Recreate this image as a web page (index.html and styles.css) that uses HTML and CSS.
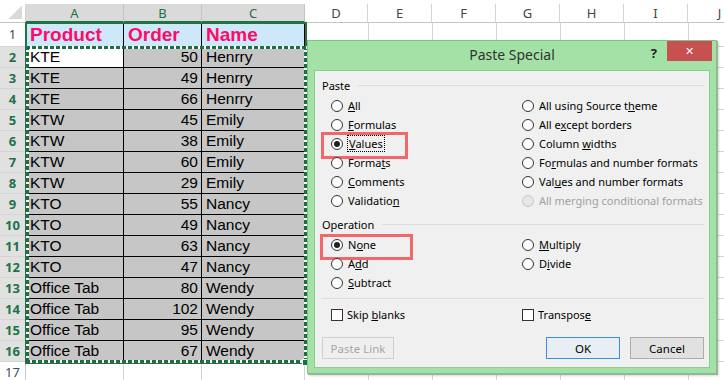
FILE: index.html
```html
<!DOCTYPE html>
<html lang="en">
<head>
  <meta charset="UTF-8" />
  <title>Paste Special</title>
  <link rel="stylesheet" href="styles.css">
</head>
<body>
  <div class="sheet">
    <div class="row head-row">
      <div class="corner"></div>
      <div class="col-head sel">A</div>
      <div class="col-head sel">B</div>
      <div class="col-head sel">C</div>
      <div class="more-heads">
        <div class="col-head">D</div>
        <div class="col-head">E</div>
        <div class="col-head">F</div>
        <div class="col-head">G</div>
        <div class="col-head">H</div>
        <div class="col-head">I</div>
        <div class="col-head">J</div>
      </div>
    </div>
    <div class="row first">
      <div class="rh">1</div>
      <div class="c hd">Product</div>
      <div class="c hd">Order</div>
      <div class="c hd">Name</div>
      <div class="rest"></div>
    </div>
    <div class="row">
      <div class="rh sel">2</div>
      <div class="c active">KTE</div>
      <div class="c num">50</div>
      <div class="c">Henrry</div>
      <div class="rest"></div>
    </div>
    <div class="row">
      <div class="rh sel">3</div>
      <div class="c">KTE</div>
      <div class="c num">49</div>
      <div class="c">Henrry</div>
      <div class="rest"></div>
    </div>
    <div class="row">
      <div class="rh sel">4</div>
      <div class="c">KTE</div>
      <div class="c num">66</div>
      <div class="c">Henrry</div>
      <div class="rest"></div>
    </div>
    <div class="row">
      <div class="rh sel">5</div>
      <div class="c">KTW</div>
      <div class="c num">45</div>
      <div class="c">Emily</div>
      <div class="rest"></div>
    </div>
    <div class="row">
      <div class="rh sel">6</div>
      <div class="c">KTW</div>
      <div class="c num">38</div>
      <div class="c">Emily</div>
      <div class="rest"></div>
    </div>
    <div class="row">
      <div class="rh sel">7</div>
      <div class="c">KTW</div>
      <div class="c num">60</div>
      <div class="c">Emily</div>
      <div class="rest"></div>
    </div>
    <div class="row">
      <div class="rh sel">8</div>
      <div class="c">KTW</div>
      <div class="c num">29</div>
      <div class="c">Emily</div>
      <div class="rest"></div>
    </div>
    <div class="row">
      <div class="rh sel">9</div>
      <div class="c">KTO</div>
      <div class="c num">55</div>
      <div class="c">Nancy</div>
      <div class="rest"></div>
    </div>
    <div class="row">
      <div class="rh sel">10</div>
      <div class="c">KTO</div>
      <div class="c num">49</div>
      <div class="c">Nancy</div>
      <div class="rest"></div>
    </div>
    <div class="row">
      <div class="rh sel">11</div>
      <div class="c">KTO</div>
      <div class="c num">63</div>
      <div class="c">Nancy</div>
      <div class="rest"></div>
    </div>
    <div class="row">
      <div class="rh sel">12</div>
      <div class="c">KTO</div>
      <div class="c num">47</div>
      <div class="c">Nancy</div>
      <div class="rest"></div>
    </div>
    <div class="row">
      <div class="rh sel">13</div>
      <div class="c">Office Tab</div>
      <div class="c num">80</div>
      <div class="c">Wendy</div>
      <div class="rest"></div>
    </div>
    <div class="row">
      <div class="rh sel">14</div>
      <div class="c">Office Tab</div>
      <div class="c num">102</div>
      <div class="c">Wendy</div>
      <div class="rest"></div>
    </div>
    <div class="row">
      <div class="rh sel">15</div>
      <div class="c">Office Tab</div>
      <div class="c num">95</div>
      <div class="c">Wendy</div>
      <div class="rest"></div>
    </div>
    <div class="row">
      <div class="rh sel">16</div>
      <div class="c">Office Tab</div>
      <div class="c num">67</div>
      <div class="c">Wendy</div>
      <div class="rest"></div>
    </div>
    <div class="row">
      <div class="rh">17</div>
      <div class="c empty"></div>
      <div class="c empty"></div>
      <div class="c empty"></div>
      <div class="rest"></div>
    </div>
  </div>

  <div class="selection"></div>
  <div class="ants"></div>
  <div class="fill-handle"></div>

  <div class="dialog">
    <div class="titlebar">
      <span class="title">Paste Special</span>
      <span class="help">?</span>
      <span class="close">&#x2715;</span>
    </div>
    <div class="panel">
      <div class="group-title"><span>Paste</span><i></i></div>
      <div class="options">
        <label class="opt"><span class="radio"></span><span><u>A</u>ll</span></label>
        <label class="opt"><span class="radio"></span><span>All using Source t<u>h</u>eme</span></label>
        <label class="opt"><span class="radio"></span><span><u>F</u>ormulas</span></label>
        <label class="opt"><span class="radio"></span><span>All e<u>x</u>cept borders</span></label>
        <label class="opt marked"><span class="radio checked"></span><span class="focus"><u>V</u>alues</span></label>
        <label class="opt"><span class="radio"></span><span>Column <u>w</u>idths</span></label>
        <label class="opt"><span class="radio"></span><span>Forma<u>t</u>s</span></label>
        <label class="opt"><span class="radio"></span><span>Fo<u>r</u>mulas and number formats</span></label>
        <label class="opt"><span class="radio"></span><span><u>C</u>omments</span></label>
        <label class="opt"><span class="radio"></span><span>Val<u>u</u>es and number formats</span></label>
        <label class="opt"><span class="radio"></span><span>Validatio<u>n</u></span></label>
        <label class="opt disabled"><span class="radio"></span><span>All merging conditional formats</span></label>
      </div>

      <div class="group-title op"><span>Operation</span><i></i></div>
      <div class="options">
        <label class="opt marked wide"><span class="radio checked"></span><span>N<u>o</u>ne</span></label>
        <label class="opt"><span class="radio"></span><span><u>M</u>ultiply</span></label>
        <label class="opt"><span class="radio"></span><span>A<u>d</u>d</span></label>
        <label class="opt"><span class="radio"></span><span>D<u>i</u>vide</span></label>
        <label class="opt"><span class="radio"></span><span><u>S</u>ubtract</span></label>
      </div>

      <div class="separator"></div>

      <div class="options checks">
        <label class="opt"><span class="box"></span><span>Skip <u>b</u>lanks</span></label>
        <label class="opt"><span class="box"></span><span>Transpos<u>e</u></span></label>
      </div>

      <div class="buttons">
        <button class="btn" disabled>Paste Link</button>
        <div class="right">
          <button class="btn default">OK</button>
          <button class="btn">Cancel</button>
        </div>
      </div>
    </div>
  </div>
</body>
</html>
```

FILE: styles.css
```css
* {
  box-sizing: border-box;
}
body {
  margin: 0;
  width: 724px;
  height: 380px;
  overflow: hidden;
  position: relative;
  background-color: #fff;
  font-family: "Liberation Sans", Arial, sans-serif;
}

/* sheet */
.sheet {
  padding-top: 4px;
}
.row {
  display: grid;
  grid-template-columns: 26px 98px 78px 103px 1fr;
  grid-template-rows: 100%;
  height: 21px;
}
.row.first {
  height: 24px;
}
.row.head-row {
  height: 19px;
}
.corner {
  border-right: 1px solid #d4d4d4;
  border-bottom: 1px solid #c6c6c6;
  background: linear-gradient(to top left, #d9d9d9 50%, transparent 50%) no-repeat right 3px bottom 3px / 13px 13px;
}
.col-head {
  text-align: center;
  font-family: "Noto Sans", sans-serif;
  font-size: 13px;
  line-height: 18px;
  color: #444;
  border-right: 1px solid #d4d4d4;
  border-bottom: 1px solid #c6c6c6;
}
.col-head.sel {
  background-color: #dadada;
  color: #217346;
  border-right-color: #c4c4c4;
  border-bottom: 2px solid #217346;
}
.more-heads {
  display: flex;
}
.more-heads .col-head {
  width: 64px;
  flex: none;
}
.more-heads .col-head:first-child {
  width: 63px;
}
.rh {
  text-align: center;
  font-family: "Noto Sans", sans-serif;
  font-size: 13px;
  line-height: 20px;
  color: #3b4a5a;
  border-right: 1px solid #c6c6c6;
  border-bottom: 1px solid #d4d4d4;
}
.row.first .rh {
  line-height: 23px;
}
.rh.sel {
  background-color: #e1e1e1;
  color: #217346;
  font-weight: bold;
}
.c {
  background-color: #c6c6c6;
  border-right: 1px solid #000;
  border-bottom: 1px solid #000;
  font-size: 15.5px;
  line-height: 20px;
  padding: 0 3px 0 4px;
  white-space: nowrap;
  overflow: hidden;
  color: #000;
}
.c.num {
  text-align: right;
}
.c.active {
  background-color: #fff;
}
.c.hd {
  background-color: #cde8f9;
  color: #ff0a6c;
  font-weight: bold;
  font-size: 19px;
  line-height: 23px;
}
.c.empty {
  background-color: #fff;
  border-color: #d4d4d4;
}
.rest {
  border-bottom: 1px solid #d4d4d4;
  background: repeating-linear-gradient(90deg, transparent 0 63px, #d4d4d4 63px 64px);
}

/* selection and copy marquee */
.selection {
  position: absolute;
  left: 25px;
  top: 22px;
  width: 282px;
  height: 342px;
  border: 2px solid #217346;
}
.ants {
  position: absolute;
  left: 26px;
  top: 46px;
  width: 281px;
  height: 317px;
  background:
    repeating-linear-gradient(90deg, #1f6e43 0 4px, #fff 4px 6px) left top / 100% 3px no-repeat,
    repeating-linear-gradient(90deg, #1f6e43 0 4px, #fff 4px 6px) left bottom / 100% 3px no-repeat,
    repeating-linear-gradient(180deg, #1f6e43 0 4px, #fff 4px 6px) left top / 3px 100% no-repeat,
    repeating-linear-gradient(180deg, #1f6e43 0 4px, #fff 4px 6px) right top / 3px 100% no-repeat;
}
.fill-handle {
  position: absolute;
  left: 302px;
  top: 359px;
  width: 7px;
  height: 7px;
  background-color: #1f6e43;
  border: 1px solid #fff;
}

/* dialog */
.dialog {
  position: absolute;
  left: 307px;
  top: 40px;
  width: 410px;
  height: 334px;
  background-color: #a4e1a7;
  border: 1px solid #7cc684;
  box-shadow: 1px 1px 0 #a9a9a9, 2px 2px 2px rgba(0, 0, 0, 0.15);
  font-family: "Noto Sans", sans-serif;
  font-size: 11px;
  color: #000;
  display: flex;
  flex-direction: column;
}
.titlebar {
  height: 29px;
  position: relative;
  display: flex;
  justify-content: center;
  align-items: center;
}
.title {
  font-size: 14px;
  color: #333;
  padding-bottom: 2px;
}
.help {
  position: absolute;
  right: 59px;
  top: 3px;
  font-weight: bold;
  font-size: 13px;
  color: #222;
}
.close {
  position: absolute;
  right: 4px;
  top: 0;
  width: 45px;
  height: 20px;
  background-color: #c75050;
  color: #fff;
  font-size: 11px;
  line-height: 20px;
  text-align: center;
}
.panel {
  flex: 1;
  margin: 0 6px 5px 6px;
  background-color: #f0f0f0;
  border: 1px solid #8acb90;
  padding: 5px 5px 0 7px;
}
.group-title {
  display: flex;
  align-items: center;
  height: 19px;
}
.group-title i {
  flex: 1;
  height: 1px;
  margin-left: 8px;
  background-color: #dcdcdc;
}
.group-title + .options {
  margin-top: 1px;
}
.group-title.op {
  margin-top: 4px;
  height: 20px;
}
.options {
  display: grid;
  grid-template-columns: 191px 1fr;
  grid-auto-rows: 19px;
  padding-left: 9px;
}
.opt {
  display: flex;
  align-items: center;
  position: relative;
  white-space: nowrap;
}
.opt.disabled {
  color: #a0a0a0;
}
.opt.marked::after {
  content: "";
  position: absolute;
  left: -10px;
  top: -2px;
  width: 81px;
  height: 21px;
  border: 3px solid #f26868;
}
.opt.marked.wide::after {
  left: -11px;
  top: -1px;
  width: 87px;
  height: 20px;
}
.radio {
  width: 12px;
  height: 12px;
  border-radius: 50%;
  border: 1px solid #333;
  background-color: #fff;
  margin-right: 5px;
  flex: none;
  position: relative;
}
.radio.checked::after {
  content: "";
  position: absolute;
  left: 2px;
  top: 2px;
  width: 6px;
  height: 6px;
  border-radius: 50%;
  background-color: #222;
}
.opt.disabled .radio {
  border-color: #c8c8c8;
  background-color: #e6e6e6;
}
.focus {
  outline: 1px dotted #000;
  outline-offset: 0;
  padding: 0 1px;
}
.separator {
  height: 1px;
  background-color: #dcdcdc;
  margin-top: 6px;
}
.checks {
  margin-top: 5px;
  grid-auto-rows: 21px;
}
.box {
  width: 12px;
  height: 12px;
  border: 1px solid #333;
  background-color: #fff;
  margin-right: 4px;
  flex: none;
}
.buttons {
  display: flex;
  justify-content: space-between;
  margin-top: 12px;
}
.buttons .right {
  display: flex;
  gap: 10px;
}
.btn {
  width: 74px;
  height: 22px;
  font-family: "Noto Sans", sans-serif;
  font-size: 11.5px;
  color: #000;
  background-color: #e1e1e1;
  border: 1px solid #adadad;
  padding: 0;
}
.btn.default {
  border-color: #3c8fe0;
  background-color: #e8eef4;
}
.btn:disabled {
  width: 72px;
  color: #a6a6a6;
  background-color: #efefef;
  border-color: #d0d0d0;
}
```
